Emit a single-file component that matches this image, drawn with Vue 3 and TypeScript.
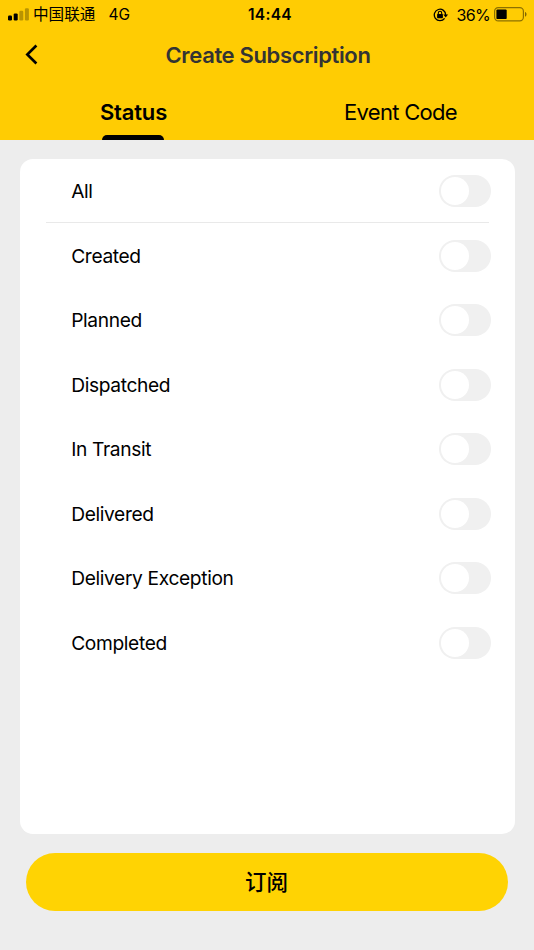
<script setup lang="ts">
import { ref } from 'vue'

interface Option {
  label: string
  enabled: boolean
}

const tabs = ['Status', 'Event Code']
const activeTab = ref(0)

const options = ref<Option[]>(
  [
    'All',
    'Created',
    'Planned',
    'Dispatched',
    'In Transit',
    'Delivered',
    'Delivery Exception',
    'Completed',
  ].map((label) => ({ label, enabled: false })),
)
</script>

<template>
  <div class="screen">
    <header class="header">
      <div class="statusbar">
        <div class="carrier">
          <svg class="signal" width="21" height="13" viewBox="0 0 21 13">
            <rect x="0" y="7.6" width="4" height="4.8" rx="1.2" />
            <rect x="5.7" y="5.4" width="4" height="7" rx="1.2" />
            <rect x="11.3" y="2.8" width="4" height="9.6" rx="1.2" opacity=".28" />
            <rect x="16.9" y="0.2" width="4" height="12.2" rx="1.2" opacity=".28" />
          </svg>
          <span class="operator">中国联通</span>
          <span class="network">4G</span>
        </div>
        <span class="clock">14:44</span>
        <div class="power">
          <svg class="lock" width="17" height="14" viewBox="0 0 17 14" fill="none">
            <path d="M11.6 10.3A5.7 5.7 0 1 1 12.7 7" stroke="#000" stroke-width="1.3" />
            <path d="M10.3 6.500h4.800l-2.400 3z" fill="#000" />
            <rect x="4.1" y="6.1" width="5.8" height="4.1" rx=".6" fill="#000" />
            <path d="M5.3 6.4V5a1.7 1.7 0 0 1 3.4 0v1.4" stroke="#000" stroke-width="1.1" />
          </svg>
          <span class="percent">36%</span>
          <svg class="battery" width="33" height="15" viewBox="0 0 33 15" fill="none">
            <rect x=".6" y=".6" width="28.8" height="13.3" rx="3.6" stroke="#000" stroke-opacity=".45" stroke-width="1.2" />
            <rect x="2.4" y="2.4" width="10.3" height="9.7" rx="1.2" fill="#000" />
            <path d="M31 5c2 .7 2 4 0 4.700z" fill="#000" fill-opacity=".5" />
          </svg>
        </div>
      </div>

      <div class="navbar">
        <button class="back" aria-label="Back">
          <svg width="14" height="21" viewBox="0 0 14 21" fill="none">
            <path d="M11.4 1.500 2.300 10.500l9.100 9" stroke="#000" stroke-width="2.600" />
          </svg>
        </button>
        <h1 class="title">Create Subscription</h1>
      </div>

      <nav class="tabs">
        <button
          v-for="(tab, i) in tabs"
          :key="tab"
          class="tab"
          :class="{ active: i === activeTab }"
          @click="activeTab = i"
        >
          <span>{{ tab }}</span>
        </button>
      </nav>
    </header>

    <main class="card">
      <label v-for="option in options" :key="option.label" class="row">
        <span class="label">{{ option.label }}</span>
        <input v-model="option.enabled" class="toggle" type="checkbox" />
      </label>
    </main>

    <button class="submit">订阅</button>
  </div>
</template>

<style>
body {
  margin: 0;
  background: #ededed;
}
</style>

<style scoped>
.screen {
  box-sizing: border-box;
  width: 534px;
  height: 950px;
  display: flex;
  flex-direction: column;
  overflow: hidden;
  background: #ededed;
  color: #000;
  font-family: Inter, "Noto Sans CJK SC", sans-serif;
}

button {
  padding: 0;
  border: 0;
  background: none;
  color: inherit;
  font: inherit;
}

.header {
  height: 139.5px;
  flex: none;
  display: flex;
  flex-direction: column;
  background: #ffcc03;
}

.statusbar {
  height: 28px;
  display: grid;
  grid-template-columns: 1fr auto 1fr;
  align-items: center;
  font-size: 16px;
  line-height: 28px;
}

.carrier,
.power {
  display: flex;
  align-items: center;
}

.carrier {
  padding-left: 8px;
}

.signal {
  margin-top: -1px;
}

.operator {
  margin-left: 4px;
  font-size: 15.6px;
  line-height: 30px;
}

.network {
  margin-left: 13px;
  font-size: 15.5px;
}

.clock {
  padding-left: 6px;
  font-size: 15.5px;
  font-weight: 600;
  letter-spacing: 0.3px;
  line-height: 28px;
}

.power {
  height: 28px;
  justify-content: flex-end;
  padding-right: 7px;
}

.lock {
  margin-top: -1px;
}

.percent {
  margin: 0 4px 0 6.5px;
  font-size: 16px;
  letter-spacing: -0.7px;
  line-height: 28px;
}

.battery {
  margin-top: -2px;
}

.navbar {
  height: 56px;
  display: grid;
  grid-template-columns: 63px 1fr 63px;
  align-items: center;
}

.back {
  display: flex;
  padding-left: 24.5px;
  padding-bottom: 3px;
}

.title {
  margin: 0;
  padding-left: 2px;
  padding-bottom: 2px;
  text-align: center;
  color: #333;
  font-size: 22px;
  font-weight: 600;
  letter-spacing: -0.35px;
  line-height: 54px;
}

.tabs {
  flex: 1;
  display: grid;
  grid-template-columns: 1fr 1fr;
}

.tab {
  height: 55.5px;
  display: flex;
  flex-direction: column;
  align-items: center;
  justify-content: flex-start;
  font-size: 22px;
  letter-spacing: -0.7px;
  line-height: 57px;
}

.tab.active {
  font-weight: 600;
  letter-spacing: -0.15px;
}

.tab.active::after {
  content: "";
  flex: none;
  width: 62px;
  height: 5px;
  margin-top: -6.5px;
  margin-right: 1px;
  border-radius: 5px 5px 0 0;
  background: #000;
}

.card {
  box-sizing: border-box;
  flex: none;
  height: 674.5px;
  margin: 19.5px 19.5px 0 19.7px;
  border-radius: 13px;
  background: #fff;
}

.row {
  box-sizing: border-box;
  height: 64.5px;
  margin: 0 26px;
  padding: 0 0 0 25.5px;
  display: flex;
  align-items: center;
  justify-content: space-between;
}

.row:first-child {
  height: 64px;
  margin-bottom: 0.6px;
  border-bottom: 1px solid #e9e9e9;
}

.label {
  font-size: 19.2px;
  letter-spacing: -0.36px;
  line-height: 24px;
}

.row:first-child .label {
  padding-top: 1px;
}

.toggle {
  appearance: none;
  box-sizing: border-box;
  display: flex;
  width: 52px;
  height: 32px;
  margin: 0 -2.5px 0 0;
  padding: 2px;
  border-radius: 16px;
  background: #f0f0f0;
}

.toggle::before {
  content: "";
  width: 28px;
  height: 28px;
  border-radius: 50%;
  background: #fff;
}

.toggle:checked {
  justify-content: flex-end;
  background: #ffcc03;
}

.submit {
  flex: none;
  height: 58px;
  margin: 19px 26px 0;
  padding-right: 1px;
  border-radius: 29px;
  background: #ffd303;
  font-size: 21.5px;
  font-weight: 500;
  line-height: 58px;
}
</style>
